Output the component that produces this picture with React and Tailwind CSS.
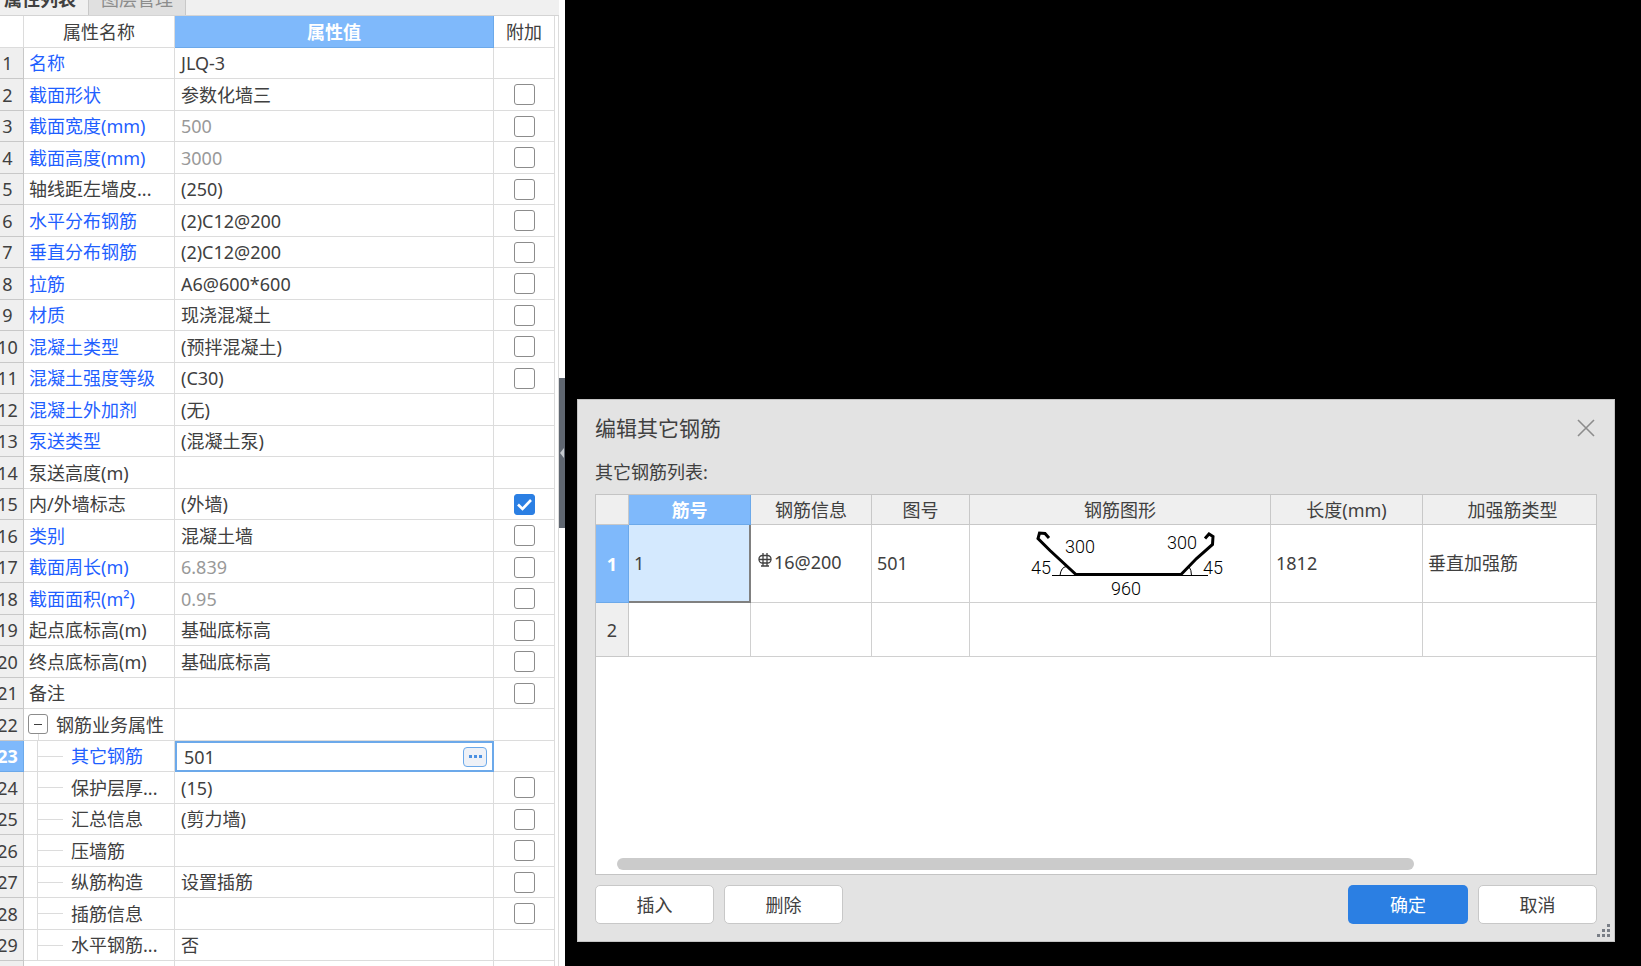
const BLUE = "text-[#1f5fff]";
const DARK = "text-[#404040]";

const rows = [
  { name: "名称", value: "JLQ-3", blue: true, box: "none" },
  { name: "截面形状", value: "参数化墙三", blue: true },
  { name: "截面宽度(mm)", value: "500", blue: true, dim: true },
  { name: "截面高度(mm)", value: "3000", blue: true, dim: true },
  { name: "轴线距左墙皮...", value: "(250)" },
  { name: "水平分布钢筋", value: "(2)C12@200", blue: true },
  { name: "垂直分布钢筋", value: "(2)C12@200", blue: true },
  { name: "拉筋", value: "A6@600*600", blue: true },
  { name: "材质", value: "现浇混凝土", blue: true },
  { name: "混凝土类型", value: "(预拌混凝土)", blue: true },
  { name: "混凝土强度等级", value: "(C30)", blue: true },
  { name: "混凝土外加剂", value: "(无)", blue: true, box: "none" },
  { name: "泵送类型", value: "(混凝土泵)", blue: true, box: "none" },
  { name: "泵送高度(m)", value: "", box: "none" },
  { name: "内/外墙标志", value: "(外墙)", box: "checked" },
  { name: "类别", value: "混凝土墙", blue: true },
  { name: "截面周长(m)", value: "6.839", blue: true, dim: true },
  { name: "截面面积(m²)", value: "0.95", blue: true, dim: true },
  { name: "起点底标高(m)", value: "基础底标高" },
  { name: "终点底标高(m)", value: "基础底标高" },
  { name: "备注", value: "" },
  { name: "钢筋业务属性", value: "", group: true, box: "none" },
  { name: "其它钢筋", value: "501", blue: true, child: true, active: true, box: "none" },
  { name: "保护层厚...", value: "(15)", child: true },
  { name: "汇总信息", value: "(剪力墙)", child: true },
  { name: "压墙筋", value: "", child: true },
  { name: "纵筋构造", value: "设置插筋", child: true },
  { name: "插筋信息", value: "", child: true },
  { name: "水平钢筋...", value: "否", child: true, box: "none" },
];

function Check({ label, checked }) {
  return (
    <span className="relative mx-auto block size-[21px]">
      <input
        type="checkbox"
        aria-label={label}
        defaultChecked={checked}
        className="peer block size-[21px] appearance-none rounded-[3px] border border-[#8c8c8c] bg-white checked:border-[#2b7fe3] checked:bg-[#2b7fe3]"
      />
      <svg
        viewBox="0 0 21 21"
        className="pointer-events-none absolute inset-0 hidden size-[21px] peer-checked:block"
        fill="none"
        stroke="#fff"
        strokeWidth="2.6"
      >
        <path d="M4 10.5 L8.5 15 L17 6" />
      </svg>
    </span>
  );
}

function NameCell({ row }) {
  if (row.group) {
    return (
      <div className="flex h-full items-stretch gap-2 pl-1">
        <div className="flex w-5 flex-col items-center">
          <div className="h-[5px]" />
          <button
            type="button"
            aria-label="折叠"
            className="flex size-5 shrink-0 items-center justify-center rounded-[3px] border border-[#8c8c8c] bg-white"
          >
            <span className="block h-px w-2 bg-[#404040]" />
          </button>
          <div className="w-px grow bg-[#dcdcdc]" />
        </div>
        <span className="self-center whitespace-nowrap">{row.name}</span>
      </div>
    );
  }
  if (row.child) {
    return (
      <div className="flex h-full items-center gap-2 pl-[13px]">
        <div className="flex h-full w-[26px] items-center border-l border-[#dcdcdc]">
          <div className="h-px w-full bg-[#dcdcdc]" />
        </div>
        <span className="whitespace-nowrap">{row.name}</span>
      </div>
    );
  }
  return <div className="truncate pl-[5px]">{row.name}</div>;
}

function PropertyRow({ row, index }) {
  const height = index % 2 === 0 ? "h-[31px]" : "h-8";
  return (
    <tr className={height}>
      <th
        scope="row"
        className={
          "border-r border-b text-center " +
          (row.active
            ? "border-[#6ca9ea] bg-[#7fb9fb] font-bold text-white"
            : "border-[#c8c8c8] bg-[#efefef] font-normal")
        }
      >
        {index + 1}
      </th>
      <td className={"h-[inherit] border-r border-b border-[#dcdcdc] " + (row.blue ? BLUE : DARK)}>
        <NameCell row={row} />
      </td>
      {row.active ? (
        <td className="h-[inherit] border-b border-[#6ca9ea]">
          <div className="flex h-full items-center border-2 border-b border-[#6ca9ea] pr-[5px] pl-[7px]">
            <input
              aria-label={row.name}
              defaultValue={row.value}
              className="h-6 min-w-0 flex-1 bg-transparent outline-none"
            />
            <button
              type="button"
              aria-label="更多"
              className="flex h-5 w-6 items-center justify-center gap-[2px] rounded-[4px] border border-[#6ca9ea] bg-[#eef1f7]"
            >
              <span className="size-[3px] bg-[#4a90e2]" />
              <span className="size-[3px] bg-[#4a90e2]" />
              <span className="size-[3px] bg-[#4a90e2]" />
            </button>
          </div>
        </td>
      ) : (
        <td
          className={
            "truncate border-r border-b border-[#dcdcdc] pl-[6px] " + (row.dim ? "text-[#999]" : DARK)
          }
        >
          {row.value}
        </td>
      )}
      <td className="border-r border-b border-[#dcdcdc]">
        {row.box !== "none" && <Check label={row.name} checked={row.box === "checked"} />}
      </td>
    </tr>
  );
}

function PropertyPanel() {
  return (
    <aside className="-ml-2 flex w-[573px] shrink-0 bg-white">
      <div className="min-w-0 flex-1">
        <div className="flex h-4 items-end overflow-hidden border-b border-[#d4d4d4] bg-[#f0f0f0]" role="tablist">
          <button type="button" role="tab" aria-selected="true" className="h-8 w-24 shrink-0 text-center font-bold text-[#404040]">
            属性列表
          </button>
          <button type="button" role="tab" aria-selected="false" className="h-8 w-[98px] shrink-0 border-x border-[#c8c8c8] bg-[#e0e0e0] text-center text-[#8c8c8c]">
            图层管理
          </button>
        </div>
        <div className="border-r border-[#dcdcdc] pr-[3px]">
          <table className="w-full table-fixed border-separate border-spacing-0">
            <colgroup>
              <col className="w-8" />
              <col className="w-[151px]" />
              <col />
              <col className="w-[61px]" />
            </colgroup>
            <thead>
              <tr className="h-8">
                <th className="border-r border-b border-[#dcdcdc]" />
                <th className="border-r border-b border-[#dcdcdc] font-normal">属性名称</th>
                <th className="border border-t-0 border-l-0 border-[#6ca9ea] bg-[#7fb9fb] font-bold text-white">属性值</th>
                <th className="border-r border-b border-[#dcdcdc] font-normal">附加</th>
              </tr>
            </thead>
            <tbody>
              {rows.map((row, i) => (
                <PropertyRow key={row.name} row={row} index={i} />
              ))}
              <tr className="h-[5px]">
                <th className="border-r border-[#c8c8c8] bg-[#efefef]" />
                <td className="border-r border-[#dcdcdc]" />
                <td className="border-r border-[#dcdcdc]" />
                <td className="border-r border-[#dcdcdc]" />
              </tr>
            </tbody>
          </table>
        </div>
      </div>
      <div className="w-[6px] shrink-0 pt-[378px]">
        <button type="button" aria-label="收起面板" className="flex h-[150px] w-full items-center justify-start bg-[#5f6670]">
          <svg viewBox="0 0 6 12" className="h-3 w-[6px]">
            <path d="M5 1 L1 6 L5 11 Z" fill="#c4c8cd" />
          </svg>
        </button>
      </div>
    </aside>
  );
}

function RebarShape() {
  return (
    <svg viewBox="0 0 220 76" className="mx-auto block h-[76px] w-[220px]" fill="none" stroke="#000">
      <g transform="translate(10 0)">
        <path
          d="M29 12 L25 7.5 L19.5 7 L18 12.5 L30 24.5 L56 48.5 L161 48.5 L176.5 32.5 L192.5 18.5 L193 10.5 L189 8 L185 12.5"
          strokeWidth="3"
        />
        <path d="M32 49.5 H56 M161 49.5 H188" />
        <path d="M40 49.5 Q41 41 46.5 40.5 M169 40.5 Q171.5 44 171.5 49.5" />
        <g fill="#000" stroke="none" className="font-['Roboto',sans-serif] text-[18px] font-light">
          <text x="45" y="27">300</text>
          <text x="147" y="23">300</text>
          <text x="11" y="48">45</text>
          <text x="183" y="48">45</text>
          <text x="91" y="69">960</text>
        </g>
      </g>
    </svg>
  );
}

function RebarDialog() {
  const head = "border-r border-b border-[#c8c8c8] bg-[#efefef] font-normal";
  const cell = "border-r border-b border-[#d0d0d0] px-[5px] pb-[2px] text-left";
  const button = "h-[39px] w-[119px] rounded-[5px] border border-[#c8c8c8] bg-white";
  return (
    <section role="dialog" aria-label="编辑其它钢筋" className="relative flex h-[543px] flex-col border border-[#c4c4c4] bg-[#e3e3e3] px-[17px]">
      <header className="flex h-14 items-center justify-between">
        <h1 className="text-[21px]">编辑其它钢筋</h1>
        <button type="button" aria-label="关闭" className="pr-[2px]">
          <svg viewBox="0 0 18 18" className="size-[18px]" fill="none" stroke="#8c8c8c" strokeWidth="1.6">
            <path d="M1 1 L17 17 M17 1 L1 17" />
          </svg>
        </button>
      </header>
      <h2 className="mb-[6px] flex h-8 items-center">其它钢筋列表:</h2>
      <div className="flex flex-1 flex-col justify-between border border-[#c4c4c4] bg-white">
        <table className="w-full table-fixed border-separate border-spacing-0">
          <colgroup>
            <col className="w-[33px]" />
            <col className="w-[122px]" />
            <col className="w-[121px]" />
            <col className="w-[98px]" />
            <col />
            <col className="w-[152px]" />
            <col className="w-[173px]" />
          </colgroup>
          <thead>
            <tr className="h-[30px]">
              <th className={head} />
              <th className="border-r border-b border-[#6ca9ea] bg-[#7fb9fb] font-bold text-white">筋号</th>
              <th className={head}>钢筋信息</th>
              <th className={head}>图号</th>
              <th className={head}>钢筋图形</th>
              <th className={head}>长度(mm)</th>
              <th className="border-b border-[#c8c8c8] bg-[#efefef] pl-[6px] font-normal">加强筋类型</th>
            </tr>
          </thead>
          <tbody>
            <tr className="h-[78px]">
              <th className="border-r border-b border-[#6ca9ea] bg-[#7fb9fb] font-bold text-white">1</th>
              <td className="border-r-2 border-b-2 border-[#808080] bg-[#d4e9fe] px-[5px]">1</td>
              <td className={cell}>
                <span className="flex items-center gap-[2px] pb-[2px] pl-[2px]">
                  <svg viewBox="0 0 14 16" className="mb-1 h-4 w-[14px]" fill="none" stroke="#404040" strokeWidth="1.3">
                    <rect x="1" y="3.5" width="12" height="7.5" rx="3.5" />
                    <path d="M5 1 V14 M9 1 V14 M1 7.5 H13 M3 14 H11" />
                  </svg>
                  16@200
                </span>
              </td>
              <td className={cell}>501</td>
              <td className="border-r border-b border-[#d0d0d0]">
                <RebarShape />
              </td>
              <td className={cell}>1812</td>
              <td className="border-b border-[#d0d0d0] px-[5px] pb-[2px]">垂直加强筋</td>
            </tr>
            <tr className="h-[54px]">
              <th className={head}>2</th>
              <td className={cell} />
              <td className={cell} />
              <td className={cell} />
              <td className={cell} />
              <td className={cell} />
              <td className="border-b border-[#d0d0d0]" />
            </tr>
          </tbody>
        </table>
        <div className="pr-[182px] pb-1 pl-[21px]">
          <div className="h-3 rounded-full bg-[#cbcbcb]" />
        </div>
      </div>
      <footer className="flex h-[66px] gap-[10px] pt-[10px]">
        <button type="button" className={button}>插入</button>
        <button type="button" className={button}>删除</button>
        <button type="button" className="ml-auto h-[39px] w-[120px] rounded-[5px] bg-[#2b7fe3] text-white">确定</button>
        <button type="button" className={button}>取消</button>
      </footer>
      <svg viewBox="0 0 13 13" className="absolute right-1 bottom-1 size-[13px]" fill="#7a7f87">
        <path d="M10 0h3v3h-3z M5 5h3v3h-3z M10 5h3v3h-3z M0 10h3v3h-3z M5 10h3v3h-3z M10 10h3v3h-3z" />
      </svg>
    </section>
  );
}

export default function App() {
  return (
    <div className="flex min-h-screen overflow-hidden bg-black font-['Noto_Sans','Noto_Sans_CJK_SC',sans-serif] text-[18px] leading-6 text-[#404040]">
      <PropertyPanel />
      <main className="min-w-0 flex-1 pt-[399px] pr-[26px] pl-3">
        <RebarDialog />
      </main>
    </div>
  );
}
